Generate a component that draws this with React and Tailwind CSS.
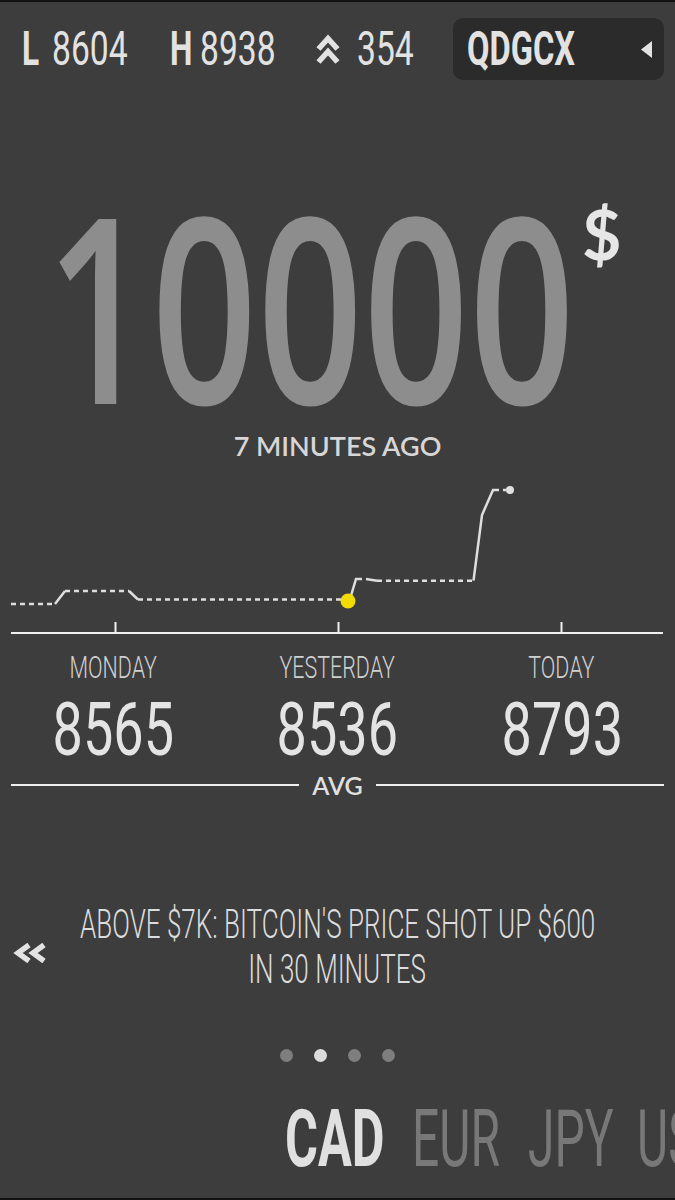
import React from "react";

const cond = "font-['Roboto','Noto_Sans',sans-serif]";
const geo = "font-['Lato','Noto_Sans',sans-serif]";
const big = "font-['Open_Sans','Noto_Sans',sans-serif]";

const days = [
  { label: "MONDAY", value: "8565" },
  { label: "YESTERDAY", value: "8536" },
  { label: "TODAY", value: "8793" },
];

const DoubleUp = () => (
  <svg width="24" height="32" viewBox="0 0 24 32">
    <path d="M2.5 16 L12 5.5 L21.5 16" fill="none" stroke="#e2e2e2" strokeWidth="5.5" strokeLinejoin="miter" />
    <path d="M2.5 29 L12 18.5 L21.5 29" fill="none" stroke="#e2e2e2" strokeWidth="5.5" strokeLinejoin="miter" />
  </svg>
);

const DoubleLeft = () => (
  <svg width="34" height="20" viewBox="0 0 34 20">
    <path d="M16 2 L5 10 L16 18" fill="none" stroke="#e2e2e2" strokeWidth="5.5" />
    <path d="M31 2 L20 10 L31 18" fill="none" stroke="#e2e2e2" strokeWidth="5.5" />
  </svg>
);

// chart coordinates are local to the svg (page y - 465)
const Chart = () => (
  <svg width="675" height="175" viewBox="0 0 675 175" className="block">
    <g stroke="#dedede" strokeWidth="2.5" fill="none">
      <path d="M11 137 H54" strokeDasharray="5 4" />
      <path d="M55 137 L65 124" />
      <path d="M65 124 H129" strokeDasharray="5 4" />
      <path d="M129 124 L138 132.5" />
      <path d="M138 132.5 H341" strokeDasharray="5 4" />
      <path d="M350 132 L356 112 H362" />
      <path d="M366 112 L377 113.7" />
      <path d="M377 113.7 H473" strokeDasharray="5 4" />
      <path d="M473.5 113.7 L482 48 L493 23 H499" />
      <path d="M503 23 H506" />
    </g>
    <circle cx="510" cy="23" r="4" fill="#e0e0e0" />
    <circle cx="348" cy="134" r="7.5" fill="#f2dc00" />
    <path d="M11 166 H663" stroke="#f0f0f0" strokeWidth="2" />
    <path d="M115.5 155 V166 M338.5 155 V166 M561.5 155 V166" stroke="#f0f0f0" strokeWidth="2" />
  </svg>
);

export default function App() {
  return (
    <div className="w-[675px] h-[1200px] overflow-hidden bg-[#3d3d3d] border-y-2 border-[#111]">
      {/* top stats bar */}
      <div className={`mt-[16px] flex h-[62px] items-center pl-[22px] pr-[11px] text-[48px] leading-none whitespace-nowrap text-[#e2e2e2] ${cond}`}>
        <div className="w-[30px]">
          <span className="inline-block origin-left scale-x-[0.66] font-bold">L</span>
        </div>
        <div className="w-[118px]">
          <span className="inline-block origin-left scale-x-[0.7]">8604</span>
        </div>
        <div className="w-[30px]">
          <span className="inline-block origin-left scale-x-[0.66] font-bold">H</span>
        </div>
        <div className="w-[116px]">
          <span className="inline-block origin-left scale-x-[0.7]">8938</span>
        </div>
        <div className="w-[41px]">
          <DoubleUp />
        </div>
        <div className="flex-1">
          <span className="inline-block origin-left scale-x-[0.7]">354</span>
        </div>
        <div className="flex h-[62px] w-[211px] items-center rounded-[10px] bg-[#2b2b2b] pl-[14px] pr-[12px]">
          <span className="inline-block origin-left scale-x-[0.68] font-bold">QDGCX</span>
          <svg width="11" height="17" viewBox="0 0 11 17" className="ml-auto">
            <polygon points="11,0 11,17 0,8.5" fill="#e2e2e2" />
          </svg>
        </div>
      </div>

      {/* price */}
      <div className="mt-[104px] flex h-[248px] items-start pl-[55px]">
        <div className="flex w-[510px] justify-center">
          <span className={`inline-block scale-x-[0.715] text-[259px] font-semibold leading-[240px] text-[#8d8d8d] ${big}`}>10000</span>
        </div>
        <span className={`ml-[17px] mt-[16px] text-[68px] font-bold leading-none text-[#e6e6e6] ${geo}`}>$</span>
      </div>
      <div className={`h-[35px] text-center text-[27px] font-semibold leading-none text-[#d6d6d6] ${geo}`}>7 MINUTES AGO</div>

      <Chart />

      {/* daily averages */}
      <div className={`grid grid-cols-3 px-px pt-[9px] text-center whitespace-nowrap ${cond}`}>
        {days.map((d) => (
          <div key={d.label} className="flex flex-col items-center">
            <span className="inline-block scale-x-[0.67] text-[32px] font-light leading-none text-[#d0d0d0]">{d.label}</span>
            <span className="mt-[9px] inline-block scale-x-[0.72] text-[75px] font-normal leading-none text-[#e4e4e4]">{d.value}</span>
          </div>
        ))}
      </div>
      <div className="mt-[6px] flex h-[24px] items-center px-[11px]">
        <div className="h-[2px] flex-1 bg-[#efefef]" />
        <span className={`px-[13px] text-[25px] font-semibold leading-none text-[#e0e0e0] ${geo}`}>AVG</span>
        <div className="h-[2px] flex-1 bg-[#efefef]" />
      </div>

      {/* news */}
      <div className="mt-[105px] grid grid-cols-[60px_minmax(0,1fr)_60px] items-center">
        <div className="mt-[12px] pl-[13px]">
          <DoubleLeft />
        </div>
        <div className={`flex flex-col items-center whitespace-nowrap text-[41px] font-light leading-[45px] text-[#dcdcdc] ${cond}`}>
          <span className="inline-block scale-x-[0.635]">ABOVE $7K: BITCOIN'S PRICE SHOT UP $600</span>
          <span className="inline-block scale-x-[0.635]">IN 30 MINUTES</span>
        </div>
        <div />
      </div>

      {/* pager */}
      <div className="mt-[57px] flex justify-center gap-[21px]">
        <span className="h-[13px] w-[13px] rounded-full bg-[#7e7e7e]" />
        <span className="h-[13px] w-[13px] rounded-full bg-[#dcdcdc]" />
        <span className="h-[13px] w-[13px] rounded-full bg-[#7e7e7e]" />
        <span className="h-[13px] w-[13px] rounded-full bg-[#7e7e7e]" />
      </div>

      {/* currencies */}
      <div className={`mt-[37px] flex whitespace-nowrap pl-[285px] text-[80px] leading-none ${cond}`}>
        <div className="w-[127px] shrink-0">
          <span className="inline-block origin-left scale-x-[0.63] font-bold text-[#e0e0e0]">CAD</span>
        </div>
        <div className="w-[116px] shrink-0">
          <span className="inline-block origin-left scale-x-[0.6] text-[#787878]">EUR</span>
        </div>
        <div className="w-[109px] shrink-0">
          <span className="inline-block origin-left scale-x-[0.6] text-[#787878]">JPY</span>
        </div>
        <div className="shrink-0">
          <span className="inline-block origin-left scale-x-[0.6] text-[#787878]">USD</span>
        </div>
      </div>
    </div>
  );
}
